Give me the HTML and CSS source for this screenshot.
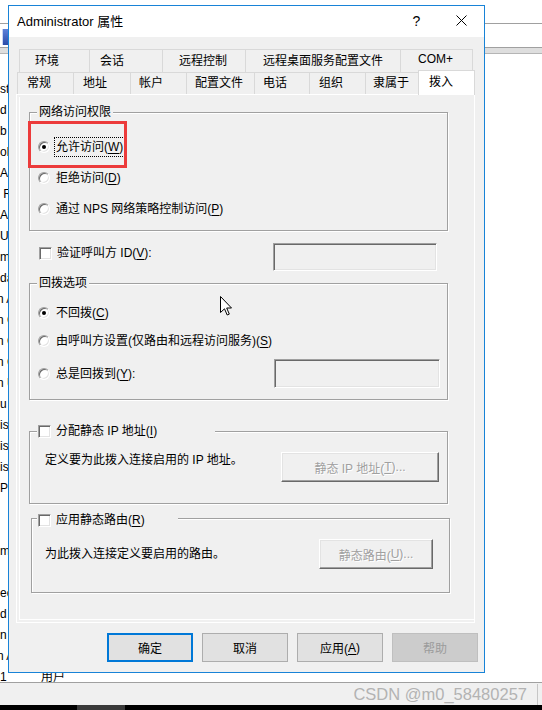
FILE: index.html
```html
<!DOCTYPE html>
<html lang="zh-CN">
<head>
<meta charset="utf-8">
<title>Administrator 属性</title>
<link rel="stylesheet" href="styles.css">
</head>
<body>
<div class="desk">
  <div class="bar1"></div>
  <div class="bar2"><span class="appicon"></span></div>
  <div class="band"></div>
  <div class="list">
    <div class="row">st</div>
    <div class="row">d</div>
    <div class="row">b</div>
    <div class="row">ol</div>
    <div class="row">Ac</div>
    <div class="row">&nbsp;R</div>
    <div class="row">Ad</div>
    <div class="row">Us</div>
    <div class="row">mi</div>
    <div class="row">da</div>
    <div class="row n">n A</div>
    <div class="row n">n C</div>
    <div class="row n">n C</div>
    <div class="row n">n C</div>
    <div class="row n">n U</div>
    <div class="row">u</div>
    <div class="row">is</div>
    <div class="row">is</div>
    <div class="row">is</div>
    <div class="row">Po</div>
    <div class="row"></div>
    <div class="row"></div>
    <div class="row">m</div>
    <div class="row"></div>
    <div class="row">ec</div>
    <div class="row">d</div>
    <div class="row">n</div>
    <div class="row n">n A</div>
    <div class="row"><span class="c1">1</span><span class="c2">用户</span></div>
  </div>
  <div class="status"><span class="wm">CSDN @m0_58480257</span><span class="sep"></span></div>
  <div class="taskbar"><span class="task"></span></div>
</div>

<div class="dialog">
  <div class="titlebar">
    <span class="title">Administrator 属性</span>
    <span class="tbtn help">?</span>
    <span class="tbtn close"><svg width="11" height="11" viewBox="0 0 11 11"><path d="M0.5 0.5 L10.5 10.5 M10.5 0.5 L0.5 10.5" stroke="#000" stroke-width="1" fill="none"/></svg></span>
  </div>
  <div class="tabs">
    <div class="tabrow back">
      <div class="tab a1">环境</div>
      <div class="tab a2">会话</div>
      <div class="tab a3">远程控制</div>
      <div class="tab a4">远程桌面服务配置文件</div>
      <div class="tab a5">COM+</div>
    </div>
    <div class="tabrow front">
      <div class="tab b1">常规</div>
      <div class="tab b2">地址</div>
      <div class="tab b3">帐户</div>
      <div class="tab b4">配置文件</div>
      <div class="tab b5">电话</div>
      <div class="tab b6">组织</div>
      <div class="tab b7">隶属于</div>
      <div class="tab b8 sel">拨入</div>
    </div>
  </div>
  <div class="panel">
    <div class="page">
      <div class="group g1">
        <div class="legend">网络访问权限</div>
        <div class="opt o1"><span class="radio on"></span><span class="lbl focus">允许访问(<u>W</u>)</span></div>
        <div class="opt o2"><span class="radio"></span><span class="lbl">拒绝访问(<u>D</u>)</span></div>
        <div class="opt o2"><span class="radio"></span><span class="lbl">通过 NPS 网络策略控制访问(<u>P</u>)</span></div>
      </div>
      <div class="checkrow">
        <span class="check"></span><span class="lbl">验证呼叫方 ID(<u>V</u>):</span>
        <span class="edit e1"></span>
      </div>
      <div class="group g2">
        <div class="legend">回拨选项</div>
        <div class="opt p1"><span class="radio on"></span><span class="lbl">不回拨(<u>C</u>)</span></div>
        <div class="opt p2"><span class="radio"></span><span class="lbl">由呼叫方设置(仅路由和远程访问服务)(<u>S</u>)</span></div>
        <div class="opt p3"><span class="radio"></span><span class="lbl">总是回拨到(<u>Y</u>):</span><span class="edit e2"></span></div>
      </div>
      <div class="group g3">
        <div class="legend chk"><span class="check"></span><span class="lbl">分配静态 IP 地址(<u>I</u>)</span></div>
        <div class="grow">
          <span class="desc">定义要为此拨入连接启用的 IP 地址。</span>
          <span class="cbtn k1">静态 IP 地址(<u>T</u>)...</span>
        </div>
      </div>
      <div class="group g4">
        <div class="legend chk"><span class="check"></span><span class="lbl">应用静态路由(<u>R</u>)</span></div>
        <div class="grow">
          <span class="desc">为此拨入连接定义要启用的路由。</span>
          <span class="cbtn k2">静态路由(<u>U</u>)...</span>
        </div>
      </div>
    </div>
  </div>
  <div class="buttons">
    <span class="btn default">确定</span>
    <span class="btn">取消</span>
    <span class="btn">应用(<u>A</u>)</span>
    <span class="btn dis">帮助</span>
  </div>
</div>

<div class="annot"></div>
<svg class="cursor" width="13" height="21" viewBox="0 0 13 21"><path d="M0.5 0.5 L0.5 16.5 L4.5 12.8 L7.2 19 L9.3 18.1 L6.7 12 L11.5 12 Z" fill="#fff" stroke="#000" stroke-width="1" stroke-linejoin="miter"/></svg>
</body>
</html>
```

FILE: styles.css
```css
* { box-sizing: border-box; }
html, body { margin: 0; padding: 0; }
body {
  width: 542px;
  height: 710px;
  overflow: hidden;
  position: relative;
  background: #fff;
  color: #000;
  font-family: "Liberation Sans", "Noto Sans CJK SC", sans-serif;
  font-size: 12px;
}
u { text-decoration: underline; text-underline-offset: 2px; }

/* background window */
.desk { display: flex; flex-direction: column; height: 710px; }
.bar1 { height: 24px; border-bottom: 1px solid #a0a0a0; }
.bar2 { height: 23px; padding: 5px 0 0 2px; }
.appicon {
  display: block; width: 12px; height: 16px;
  background: linear-gradient(#5d82da, #2b4ba8);
  border-left: 1px solid #c9d5f2;
}
.band { height: 7px; border-top: 1px solid #a0a0a0; background: #dedede; border-bottom: 1px solid #b5b5b5; }
.list { flex: 1; overflow: hidden; padding-top: 25px; }
.row { height: 21px; line-height: 21px; white-space: nowrap; }
.row.n { text-indent: -3px; }
.c1 { display: inline-block; width: 41px; }
.status {
  height: 23px; border-top: 1px solid #a0a0a0; background: #f0f0f0;
  display: flex; align-items: center; justify-content: flex-end;
}
.wm { font-size: 16.5px; color: #b3b3b3; margin-right: 10px; }
.sep { width: 1px; height: 21px; background: #c6c6c6; margin-right: 4px; }
.taskbar { height: 5px; background: #000; padding-left: 77px; }
.task { display: block; width: 48px; height: 5px; background: #3a3a3a; }

/* dialog */
.dialog {
  position: absolute; left: 8px; top: 5px;
  width: 477px; height: 668px;
  border: 1px solid #1883d7;
  background: #f0f0f0;
  display: flex; flex-direction: column;
}
.titlebar { height: 31px; background: #fff; display: flex; align-items: center; padding: 0 0 2px 8px; flex: none; }
.title { font-size: 13px; flex: 1; }
.tbtn { width: 45px; height: 29px; display: flex; align-items: center; justify-content: center; }
.help { font-size: 14px; }

.tabs { margin-top: 12px; flex: none; }
.tabrow { display: flex; }
.tabrow.back { margin-left: 10px; height: 23px; }
.tabrow.front { margin-left: 8px; height: 22px; }
.tab {
  border: 1px solid #d9d9d9; border-bottom: none;
  margin-right: -1px;
  display: flex; align-items: center;
  background: #f0f0f0;
  white-space: nowrap;
  padding-bottom: 4px;
}
.a1 { width: 71px; padding-left: 15px; }
.a2 { width: 74px; padding-left: 10px; }
.a3 { width: 84px; padding-left: 16px; }
.a4 { width: 156px; padding-left: 17px; }
.a5 { width: 73px; padding-left: 17px; }
.b1 { width: 57px; padding-left: 9px; }
.b2 { width: 58px; padding-left: 9px; }
.b3 { width: 57px; padding-left: 8px; }
.b4 { width: 69px; padding-left: 8px; }
.b5 { width: 56px; padding-left: 8px; }
.b6 { width: 57px; padding-left: 9px; }
.b7 { width: 54px; padding-left: 7px; }
.b8 { width: 57px; padding-left: 10px; }
.tab.sel {
  height: 25px; margin-top: -2px; margin-bottom: -1px;
  background: #fff; position: relative; z-index: 1;
  padding-bottom: 5px;
}

.panel {
  margin-left: 7px; width: 459px; height: 529px; flex: none;
  border: 1px solid #fff;
  padding: 2px 0 2px 2px;
  display: flex;
}
.page {
  flex: 1;
  border-left: 1px solid #fff; border-bottom: 1px solid #fff;
  padding-top: 15px;
}

.group {
  width: 419px;
  border: 1px solid #a0a0a0;
  box-shadow: inset 1px 1px 0 #fff, 1px 1px 0 #fff;
  display: flex; flex-direction: column;
}
.legend {
  align-self: flex-start;
  height: 16px; line-height: 16px;
  margin: -9px 0 0 7px; padding: 0 2px;
  background: #f0f0f0;
  display: flex; align-items: center;
  white-space: nowrap;
}
.legend.chk { padding: 0 0 0 1px; }
.g1 { margin-left: 9px; height: 119px; }
.g2 { margin-left: 9px; height: 117px; margin-top: 12px; }
.g3 { margin-left: 9px; height: 73px; margin-top: 31px; }
.g4 { margin-left: 11px; height: 75px; margin-top: 14px; }
.g3 .legend { width: 178px; }
.g4 .legend { width: 141px; margin: -7px 0 0 5px; }

.opt { display: flex; align-items: center; height: 20px; padding-left: 8px; white-space: nowrap; }
.o1 { margin-top: 17px; }
.o2 { margin-top: 11px; }
.p1 { margin-top: 12px; }
.p2 { margin-top: 8px; }
.p3 { margin-top: 8px; height: 29px; }

.lbl { line-height: 16px; }
.focus { outline: 1px dotted #000; outline-offset: 1px; }

.radio {
  flex: none; position: relative;
  width: 12px; height: 12px; border-radius: 50%;
  background: #fff;
  border: 1px solid; border-color: #a0a0a0 #fff #fff #a0a0a0;
  box-shadow: inset 1px 1px 0 #696969, inset -1px -1px 0 #e3e3e3;
  margin-right: 6px;
}
.radio.on::after {
  content: ""; position: absolute; left: 3px; top: 3px;
  width: 4px; height: 4px; border-radius: 50%; background: #000;
}
.check {
  flex: none;
  width: 13px; height: 13px;
  background: #fff;
  border: 1px solid; border-color: #a0a0a0 #fff #fff #a0a0a0;
  box-shadow: inset 1px 1px 0 #696969, inset -1px -1px 0 #e3e3e3;
  margin-right: 5px;
}
.edit {
  flex: none;
  margin-left: auto;
  background: #f0f0f0;
  border: 1px solid; border-color: #a0a0a0 #fff #fff #a0a0a0;
  box-shadow: inset 1px 1px 0 #696969, inset -1px -1px 0 #e3e3e3;
}
.e1 { width: 164px; height: 28px; margin-right: 37px; }
.e2 { width: 166px; height: 29px; margin-right: 7px; }

.checkrow {
  display: flex; align-items: flex-start;
  height: 28px; margin-top: 12px; margin-left: 19px;
}
.checkrow .check { margin-top: 4px; }
.checkrow .lbl { line-height: 20px; }

.grow { display: flex; margin-top: 11px; }
.g3 .grow { align-items: flex-start; padding-left: 15px; }
.g4 .grow { align-items: center; padding-left: 13px; height: 30px; }
.desc { line-height: 20px; white-space: nowrap; }
.cbtn {
  flex: none; margin-left: auto; height: 30px;
  display: flex; align-items: center; justify-content: center;
  background: #f0f0f0;
  border: 1px solid; border-color: #fff #696969 #696969 #fff;
  box-shadow: inset -1px -1px 0 #a0a0a0, inset 1px 1px 0 #e3e3e3;
  color: #a0a0a0; text-shadow: 1px 1px 0 #fff;
  white-space: nowrap;
}
.k1 { width: 158px; margin-right: 8px; margin-top: 2px; }
.k2 { width: 114px; margin-right: 16px; }

.buttons { display: flex; justify-content: flex-end; gap: 9px; margin-top: 10px; padding-right: 6px; flex: none; }
.btn {
  width: 86px; height: 29px;
  border: 1px solid #adadad; background: #e1e1e1;
  display: flex; align-items: center; justify-content: center;
}
.btn.default { border: 2px solid #0078d7; }
.btn.dis { background: #cccccc; border-color: #bfbfbf; color: #9b9b9b; }

/* overlays */
.annot {
  position: absolute; left: 28px; top: 121px;
  width: 99px; height: 47px;
  border: 3px solid #ec3b3b;
}
.cursor { position: absolute; left: 220px; top: 296px; }
```
